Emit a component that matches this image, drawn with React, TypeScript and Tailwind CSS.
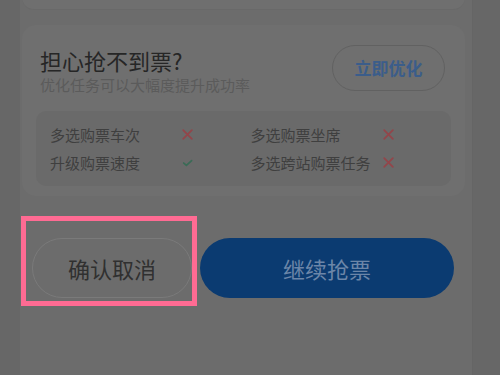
const font = { fontFamily: '"Noto Sans CJK SC", "Noto Sans", sans-serif' };

const Cross = () => (
  <svg width="13" height="13" viewBox="0 0 12 12" className="shrink-0">
    <path d="M2 2L10 10M10 2L2 10" stroke="#93454a" strokeWidth="1.6" strokeLinecap="round" />
  </svg>
);

const Check = () => (
  <svg width="13" height="13" viewBox="0 0 12 12" className="shrink-0">
    <path d="M2.5 6.5L5 8.6L9.8 4.2" stroke="#3a6b56" strokeWidth="1.6" fill="none" strokeLinecap="round" />
  </svg>
);

const features = [
  { label: '多选购票车次', ok: false },
  { label: '多选购票坐席', ok: false },
  { label: '升级购票速度', ok: true },
  { label: '多选跨站购票任务', ok: false },
];

export default function App() {
  return (
    <div className="w-[500px] h-[375px] overflow-hidden bg-[#686868] flex" style={font}>
      <div className="w-[20px] bg-[#676767]" />
      <div className="w-[452px] bg-[#6c6c6c] flex flex-col">
        {/* previous card bottom */}
        <div className="mx-[2px] mr-[7px] h-[12px] -mt-[2px] rounded-b-[12px] bg-[#6f6f6f] border-b border-[#696969]" />

        {/* upsell card */}
        <div className="mt-[15px] ml-[2px] mr-[7px] h-[171px] rounded-[14px] bg-[#6f6f6f] pl-[18px] pr-[16px] pt-[20px]">
          <div className="flex justify-between">
            <div className="flex flex-col pt-[2px]">
              <div className="text-[22px] leading-[26px] text-[#262626]">担心抢不到票?</div>
              <div className="mt-[2px] text-[15px] leading-[20px] text-[#5b5b5b]">优化任务可以大幅度提升成功率</div>
            </div>
            <div className="mr-[4px] w-[113px] h-[46px] rounded-full border border-[#616161] flex items-center justify-center text-[17px] font-bold text-[#3b5d8a]">
              立即优化
            </div>
          </div>
          <div className="mt-[16px] -ml-[4px] -mr-[2px] h-[75px] rounded-[10px] bg-[#6a6a6a] grid grid-cols-2 content-center gap-y-[8px] pl-[14px]">
            {features.map((f) => (
              <div key={f.label} className="flex items-center">
                <span className="w-[131px] text-[15px] leading-[20px] text-[#3f3f3f]">{f.label}</span>
                {f.ok ? <Check /> : <Cross />}
              </div>
            ))}
          </div>
        </div>

        {/* action buttons */}
        <div className="mt-[20px] flex items-start">
          <div className="ml-[1px] w-[176px] h-[90px] border-[5px] border-[#ff6b93] pl-[6px] pt-[17px]">
            <div className="w-[160px] h-[60px] rounded-full border border-[#7a7a7a] flex items-center justify-center text-[22px] text-[#303030]">
              确认取消
            </div>
          </div>
          <div className="ml-[3px] mt-[22px] w-[254px] h-[60px] rounded-full bg-[#0b3b71] flex items-center justify-center text-[22px] text-[#6c86a8]">
            继续抢票
          </div>
        </div>
      </div>
      <div className="w-[28px] bg-[#676767] border-l border-[#656565]" />
    </div>
  );
}
